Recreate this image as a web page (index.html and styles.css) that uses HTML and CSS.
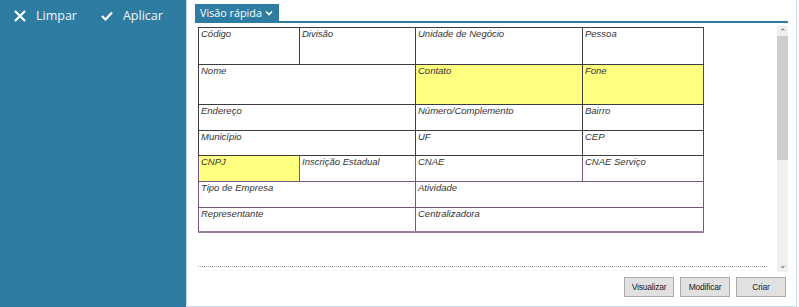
FILE: index.html
```html
<!DOCTYPE html>
<html lang="pt-BR">
    <head>
        <meta charset="UTF-8">
        <title>Visão rápida</title>
        <link rel="stylesheet" href="styles.css">
    </head>
    <body>
        <div class="sidebar">
            <div class="side-btn">
                <svg width="12" height="12" viewBox="0 0 12 12"><path d="M1 1L11 11M11 1L1 11" stroke="#fff" stroke-width="2.2" fill="none"/></svg>
                <span>Limpar</span>
            </div>
            <div class="side-btn">
                <svg width="12" height="10" viewBox="0 0 12 10"><path d="M1 5L4.5 8.5L11 1.5" stroke="#fff" stroke-width="2.2" fill="none"/></svg>
                <span>Aplicar</span>
            </div>
        </div>

        <div class="main">
            <div class="tab-bar">
                <div class="tab">Visão rápida
                    <svg width="8" height="6" viewBox="0 0 8 6"><path d="M1 1.5L4 4.5L7 1.5" stroke="#fff" stroke-width="1.6" fill="none"/></svg>
                </div>
            </div>

            <div class="scroll-row">
                <div class="content">
                    <table class="form-grid">
                        <colgroup>
                            <col style="width:101px">
                            <col style="width:116px">
                            <col style="width:167px">
                            <col style="width:121px">
                        </colgroup>
                        <tr class="r1">
                            <td>Código</td>
                            <td>Divisão</td>
                            <td>Unidade de Negócio</td>
                            <td>Pessoa</td>
                        </tr>
                        <tr class="r2">
                            <td colspan="2">Nome</td>
                            <td class="hl">Contato</td>
                            <td class="hl">Fone</td>
                        </tr>
                        <tr class="r3">
                            <td colspan="2">Endereço</td>
                            <td>Número/Complemento</td>
                            <td>Bairro</td>
                        </tr>
                        <tr class="r4">
                            <td colspan="2">Município</td>
                            <td>UF</td>
                            <td>CEP</td>
                        </tr>
                        <tr class="r5 lower">
                            <td class="hl">CNPJ</td>
                            <td>Inscrição Estadual</td>
                            <td>CNAE</td>
                            <td>CNAE Serviço</td>
                        </tr>
                        <tr class="r6 lower">
                            <td colspan="2">Tipo de Empresa</td>
                            <td colspan="2">Atividade</td>
                        </tr>
                        <tr class="r7 lower">
                            <td colspan="2">Representante</td>
                            <td colspan="2">Centralizadora</td>
                        </tr>
                    </table>
                    <div class="dots"></div>
                </div>
                <div class="scrollbar">
                    <span class="arrow">&#8963;</span>
                    <div class="thumb"></div>
                    <span class="arrow down">&#8964;</span>
                </div>
            </div>

            <div class="actions">
                <button>Visualizar</button>
                <button>Modificar</button>
                <button>Criar</button>
            </div>
        </div>
    </body>
</html>
```

FILE: styles.css
```css
body {
    margin: 0;
    display: flex;
    height: 307px;
    background: #fff;
    font-family: "Liberation Sans", Arial, sans-serif;
    overflow: hidden;
}

.sidebar {
    width: 186px;
    height: 307px;
    background-color: #2e7ca2;
    display: flex;
    align-items: flex-start;
    gap: 24px;
    padding: 7px 0 0 14px;
    box-sizing: border-box;
}

.side-btn {
    display: flex;
    align-items: center;
    gap: 10px;
    color: #eef4f8;
    font-family: "Open Sans", "Noto Sans", sans-serif;
    font-size: 12.5px;
}

.main {
    width: 611px;
    height: 307px;
    box-sizing: border-box;
    border-left: 1px solid #c4ddee;
    border-right: 1px solid #c4ddee;
    border-bottom: 1px solid #c4ddee;
    padding: 3px 8px 0 8px;
}

.tab-bar {
    height: 18px;
    border-bottom: 2px solid #2e7ca2;
}

.tab {
    display: inline-flex;
    align-items: center;
    gap: 3px;
    height: 18px;
    padding: 0 6px 0 5px;
    background-color: #2e7ca2;
    color: #fff;
    font-family: "Open Sans", "Noto Sans", sans-serif;
    font-size: 10.8px;
}

.scroll-row {
    display: flex;
    height: 249px;
}

.content {
    flex: 1;
    padding: 4px 0 0 3px;
}

.form-grid {
    border-collapse: collapse;
    table-layout: fixed;
    width: 505px;
}

.form-grid td {
    border: 1px solid #3d3d3d;
    vertical-align: top;
    padding: 0 2px;
    font-size: 9.5px;
    line-height: 11px;
    font-style: italic;
    color: #333;
    white-space: nowrap;
    overflow: hidden;
}

.form-grid td:last-child {
    border-right-color: #5b3d60;
}

.form-grid .lower td {
    border-color: #7a567e;
}

.form-grid .r5 td {
    border-top-color: #b896bb;
}

.form-grid .r7 td {
    border-bottom: 2px solid #9c7ca0;
}

.form-grid .hl {
    background-color: #ffff80;
}

.r1 td { height: 36px; }
.r2 td { height: 39px; }
.r3 td { height: 25px; }
.r4 td { height: 24px; }
.r5 td { height: 25px; }
.r6 td { height: 25px; }
.r7 td { height: 23px; }

.dots {
    width: 569px;
    margin-top: 33px;
    border-top: 1px dotted #9a9a9a;
}

.scrollbar {
    width: 11px;
    margin-top: 3px;
    background-color: #f0f0f0;
    display: flex;
    flex-direction: column;
    align-items: center;
}

.arrow {
    height: 10px;
    font-size: 9px;
    line-height: 12px;
    color: #606060;
}

.arrow.down {
    margin-top: auto;
    line-height: 6px;
}

.thumb {
    width: 11px;
    height: 124px;
    background-color: #cdcdcd;
}

.actions {
    display: flex;
    justify-content: flex-end;
    gap: 6px;
    padding: 5px 2px 0 0;
}

.actions button {
    width: 50px;
    height: 20px;
    padding: 0;
    background-color: #e1e1e1;
    border: 1px solid #adadad;
    font-family: "Liberation Sans", Arial, sans-serif;
    font-size: 8.5px;
    color: #222;
    letter-spacing: -0.2px;
}
```
